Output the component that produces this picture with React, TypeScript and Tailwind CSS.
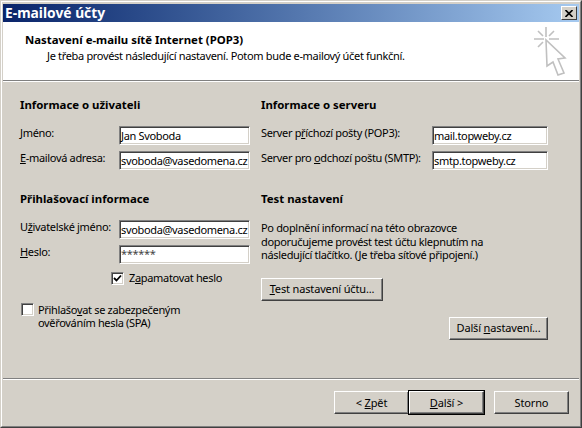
const face = "bg-[#d4d0c8]";

const Field = ({ value, width, password }: { value: string; width: string; password?: boolean }) => (
  <div
    className={`${width} h-[19px] bg-white border-t border-l border-t-[#808080] border-l-[#808080] border-r border-b border-r-white border-b-white shadow-[inset_1px_1px_0_#404040,inset_-1px_-1px_0_#d4d0c8] pl-[1px] overflow-hidden whitespace-nowrap leading-[14px] ${password ? "text-[#444] pt-[1px]" : "pt-[2px]"}`}
  >
    {value}
  </div>
);

const Btn = ({ children, width, main }: { children: React.ReactNode; width: string; main?: boolean }) => (
  <div
    className={`${width} h-[23px] flex items-center justify-center tracking-[-0.15px] border border-t-white border-l-white border-r-[#404040] border-b-[#404040] shadow-[inset_-1px_-1px_0_#808080] ${main ? "outline outline-1 outline-black" : ""}`}
  >
    <span>{children}</span>
  </div>
);

const Check = ({ checked }: { checked?: boolean }) => (
  <div className="w-[13px] h-[13px] shrink-0 bg-white border border-t-[#808080] border-l-[#808080] border-r-white border-b-white shadow-[inset_1px_1px_0_#404040,inset_-1px_-1px_0_#d4d0c8] flex items-center justify-center">
    {checked && (
      <svg width="9" height="9" viewBox="0 0 9 9">
        <path d="M1 4 L3.5 6.5 L8 1.5" fill="none" stroke="#000" strokeWidth="1.8" />
      </svg>
    )}
  </div>
);

const Row = ({ label, children, cls }: { label: React.ReactNode; children: React.ReactNode; cls: string }) => (
  <div className={`flex items-center justify-between ${cls}`}>
    <span className="-mt-[5px]">{label}</span>
    {children}
  </div>
);

const Head = ({ children, cls }: { children: React.ReactNode; cls?: string }) => (
  <div className={`font-bold text-[11.4px] tracking-normal h-[14px] ${cls ?? ""}`}>{children}</div>
);

const CursorIcon = () => (
  <svg width="44" height="56" viewBox="526 24 44 56" fill="none" stroke="#c0c0c0" strokeWidth="1.6">
    <path d="M545 27 V37 M533 39 H543 M548 39 H558 M537 31 L542 36 M553 31 L548 36 M537 47 L542 42" />
    <path d="M545 40 L546 66 L552 62 L557 75 L563 73 L557 59 L564 58 Z" />
  </svg>
);

export default function App() {
  return (
    <div
      className={`w-[582px] h-[428px] ${face} border border-t-[#d4d0c8] border-l-[#d4d0c8] border-r-[#404040] border-b-[#404040] text-[11px] tracking-[-0.33px] leading-[14px] text-black overflow-hidden`}
      style={{ fontFamily: '"Noto Sans", "DejaVu Sans", sans-serif' }}
    >
      <div className="h-full border border-t-white border-l-white border-r-[#808080] border-b-[#808080] px-[1px] pt-[2px] flex flex-col">
        {/* title bar */}
        <div className="h-[18px] bg-gradient-to-r from-[#0a246a] to-[#a6caf0] flex items-center justify-between pl-[2px] pr-[2px]">
          <span className="text-white font-bold text-[13.8px] tracking-normal">E-mailové účty</span>
          <div className={`w-[16px] h-[14px] ${face} border border-t-white border-l-white border-r-[#404040] border-b-[#404040] flex items-center justify-center`}>
            <svg width="8" height="7" viewBox="0 0 8 7">
              <path d="M0.5 0 L7.5 7 M7.5 0 L0.5 7" stroke="#000" strokeWidth="1.6" />
            </svg>
          </div>
        </div>

        {/* white header */}
        <div className="h-[58px] bg-white flex justify-between pr-[8px] pt-[2px]">
          <div className="pl-[22px] pt-[9px]">
            <Head>Nastavení e-mailu sítě Internet (POP3)</Head>
            <div className="pl-[22px] pt-[2px]">Je třeba provést následující nastavení. Potom bude e-mailový účet funkční.</div>
          </div>
          <CursorIcon />
        </div>
        <div className="h-[2px] border-t border-t-[#808080] border-b border-b-white" />

        {/* body */}
        <div className="flex-1 flex pl-[17px]">
          <div className="w-[230px] pt-[16px] flex flex-col">
            <Head>Informace o uživateli</Head>
            <Row cls="mt-[14px]" label={<><u>J</u>méno:</>}>
              <Field value="Jan Svoboda" width="w-[131px]" />
            </Row>
            <Row cls="mt-[6px]" label={<><u>E</u>-mailová adresa:</>}>
              <Field value="svoboda@vasedomena.cz" width="w-[131px]" />
            </Row>
            <Head cls="mt-[22px]">Přihlašovací informace</Head>
            <Row cls="mt-[14px]" label={<>U<u>ž</u>ivatelské jméno:</>}>
              <Field value="svoboda@vasedomena.cz" width="w-[131px]" />
            </Row>
            <Row cls="mt-[6px]" label={<><u>H</u>eslo:</>}>
              <Field value="******" width="w-[131px]" password />
            </Row>
            <div className="flex items-center gap-[5px] mt-[7px] pl-[91px]">
              <Check checked />
              <span>Z<u>a</u>pamatovat heslo</span>
            </div>
            <div className="flex items-start gap-[4px] mt-[18px] pl-[1px]">
              <Check />
              <span className="leading-[13px]">Přihlašo<u>v</u>at se zabezpečeným<br />ověřováním hesla (SPA)</span>
            </div>
          </div>

          <div className="w-[287px] ml-[11px] pt-[16px] flex flex-col">
            <Head>Informace o serveru</Head>
            <Row cls="mt-[14px]" label={<>Server p<u>ř</u>íchozí pošty (POP3):</>}>
              <Field value="mail.topweby.cz" width="w-[116px]" />
            </Row>
            <Row cls="mt-[6px]" label={<>Server pro <u>o</u>dchozí poštu (SMTP):</>}>
              <Field value="smtp.topweby.cz" width="w-[116px]" />
            </Row>
            <Head cls="mt-[22px]">Test nastavení</Head>
            <p className="mt-[15px] leading-[13.5px]">
              Po doplnění informací na této obrazovce<br />
              doporučujeme provést test účtu klepnutím na<br />
              následující tlačítko. (Je třeba síťové připojení.)
            </p>
            <div className="mt-[16px]">
              <Btn width="w-[122px]"><u>T</u>est nastavení účtu...</Btn>
            </div>
            <div className="mt-[16px] flex justify-end">
              <Btn width="w-[99px]">Další <u>n</u>astavení...</Btn>
            </div>
          </div>
        </div>

        {/* footer */}
        <div className="h-[2px] border-t border-t-[#808080] border-b border-b-white" />
        <div className="h-[46px] flex justify-end pt-[11px] pr-[10px]">
          <Btn width="w-[75px]">&lt; <u>Z</u>pět</Btn>
          <Btn width="w-[75px]" main><u>D</u>alší &gt;</Btn>
          <div className="w-[10px]" />
          <Btn width="w-[75px]">Storno</Btn>
        </div>
      </div>
    </div>
  );
}
